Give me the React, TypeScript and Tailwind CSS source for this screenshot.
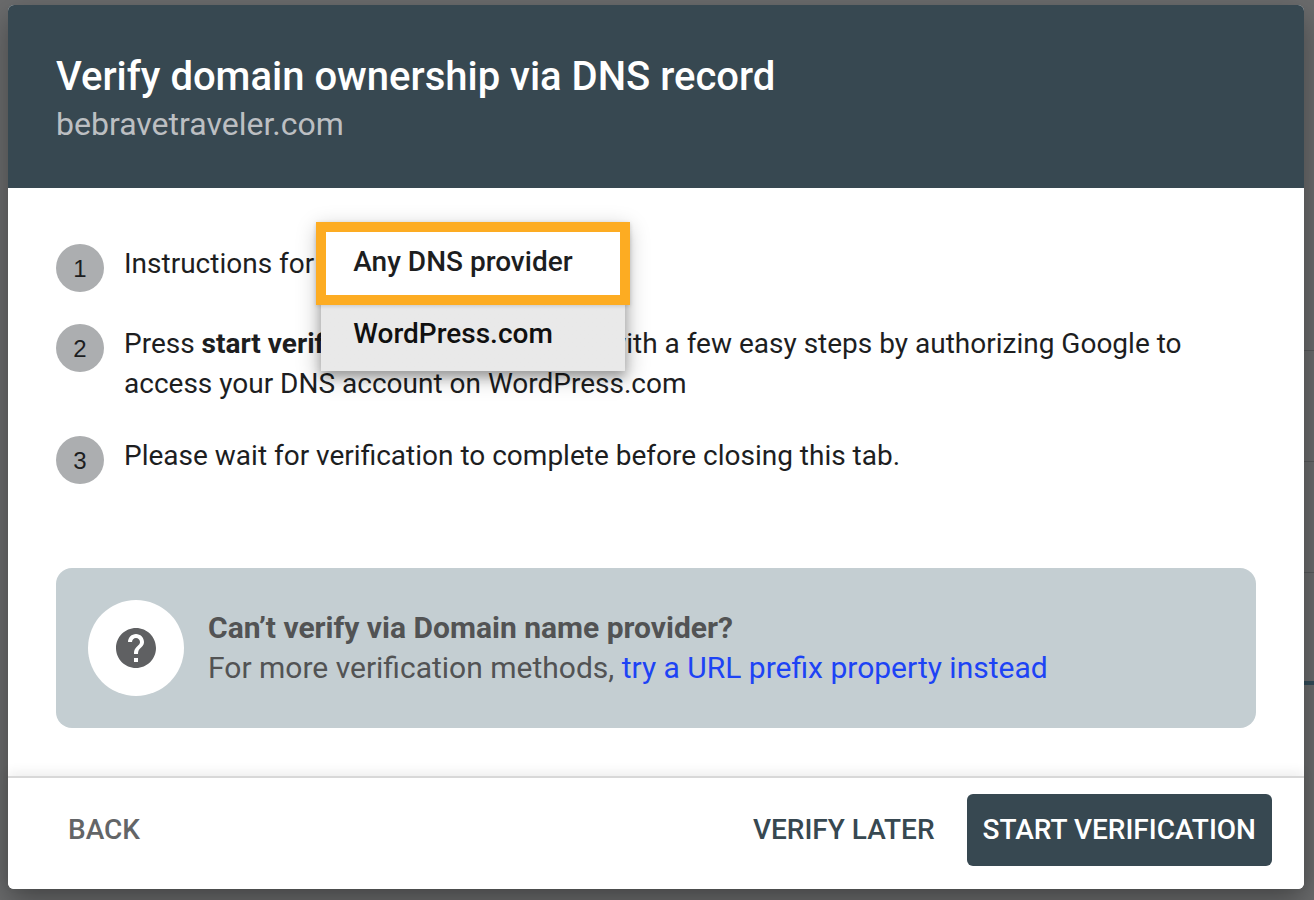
import { MdHelp } from 'react-icons/md';
import type { ReactNode } from 'react';

const providers = [
  { value: 'any', label: 'Any DNS provider' },
  { value: 'wordpress', label: 'WordPress.com' },
];

function Step({ number, children }: { number: number; children: ReactNode }) {
  return (
    <li className="flex items-start gap-5">
      <span className="flex size-12 shrink-0 items-center justify-center rounded-full bg-[#acaeb0] pt-0.5 font-['Liberation_Sans'] text-2xl">
        {number}
      </span>
      <div className="min-w-0 flex-1">{children}</div>
    </li>
  );
}

function ProviderMenu() {
  return (
    <div className="absolute -top-[22px] left-full z-10 ml-0.5 w-[314px] pt-[5px]">
      <div className="mx-[5px] shadow-[0_4px_20px_4px_rgba(0,0,0,0.22),0_6px_10px_rgba(0,0,0,0.25)]">
        <select
          id="provider"
          size={2}
          defaultValue="wordpress"
          className="block w-full appearance-none overflow-hidden border-0 bg-white text-[#1d1e1f] outline-none"
        >
          {providers.map((p) => (
            <option
              key={p.value}
              value={p.value}
              className="h-18 bg-linear-to-b from-white to-white px-8 pt-[18px] font-medium last:from-[#e9e9e9] last:to-[#e9e9e9]"
            >
              {p.label}
            </option>
          ))}
        </select>
      </div>
      {/* highlight around the first option */}
      <div className="pointer-events-none absolute inset-x-0 top-0 h-[83px] border-10 border-[#fdac22] shadow-[0_1px_4px_rgba(0,0,0,0.15)]" />
    </div>
  );
}

// sliver of the page behind the dialog
function PageEdge() {
  return (
    <div className="flex w-[10px] shrink-0 flex-col pt-[350px]">
      <div className="h-[111px] border-t border-[#58595b]" />
      <div className="h-[111px] border-t border-[#58595b]" />
      <div className="h-[109px] border-t border-[#58595b]" />
      <div className="h-1 bg-[#334b58]" />
    </div>
  );
}

export default function App() {
  return (
    <div className="flex min-h-screen overflow-hidden bg-[#6a6b6c] pl-2 font-[Roboto,sans-serif] text-[28px] leading-10 text-[#1d1e1f]">
      <main className="relative z-10 mt-[5px] mb-[11px] flex min-w-0 flex-1 flex-col rounded-md bg-white shadow-[0_12px_30px_rgba(0,0,0,0.35)]">
        <header className="rounded-t-md bg-[#374851] px-12 pt-12 pb-11">
          <h1 className="text-[40px] leading-12 font-medium text-white">
            Verify domain ownership via DNS record
          </h1>
          <p className="pt-[3px] text-[32px] leading-10 text-[#bcbfc2]">bebravetraveler.com</p>
        </header>

        <section className="flex-1 px-12 pt-14 pb-12">
          <ol className="space-y-8">
            <Step number={1}>
              <div className="relative inline-block">
                <label htmlFor="provider">Instructions for</label>
                <ProviderMenu />
              </div>
            </Step>
            <Step number={2}>
              <p>
                Press <b className="font-bold">start verification</b> to verify online with a few
                easy steps by authorizing Google to access your DNS account on WordPress.com
              </p>
            </Step>
            <Step number={3}>
              <p>Please wait for verification to complete before closing this tab.</p>
            </Step>
          </ol>

          <aside className="mt-21 flex items-center gap-6 rounded-2xl bg-[#c4ced2] p-8 text-[30px] text-[#525354]">
            <span className="flex size-24 shrink-0 items-center justify-center rounded-full bg-white">
              <MdHelp className="size-12 text-[#5f6062]" />
            </span>
            <div>
              <h2 className="font-bold">Can’t verify via Domain name provider?</h2>
              <p>
                For more verification methods,{' '}
                <a href="#url-prefix" className="text-[#1d43f5]">
                  try a URL prefix property instead
                </a>
              </p>
            </div>
          </aside>
        </section>

        <footer className="flex items-center gap-4 rounded-b-md border-t-2 border-[#d8d8d8] bg-white px-8 pt-4 pb-[23px] font-medium shadow-[0_-4px_12px_rgba(0,0,0,0.07)]">
          <button type="button" className="mr-auto h-18 px-7 text-[#636567]">
            BACK
          </button>
          <button type="button" className="h-18 px-4 text-[#374851]">
            VERIFY LATER
          </button>
          <button type="button" className="h-18 rounded-md bg-[#374851] px-4 text-white">
            START VERIFICATION
          </button>
        </footer>
      </main>
      <PageEdge />
    </div>
  );
}
